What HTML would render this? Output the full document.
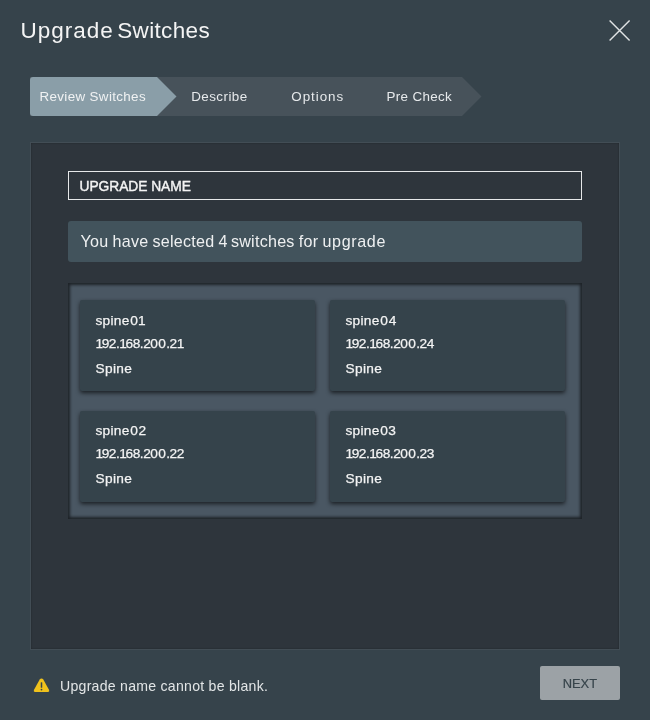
<!DOCTYPE html>
<html>
<head>
<meta charset="utf-8">
<style>
html,body{margin:0;padding:0;}
body{width:650px;height:720px;background:#36434b;position:relative;overflow:hidden;font-family:"Liberation Sans",sans-serif;color:#f2f2f2;}
.a{position:absolute;white-space:nowrap;}
.title{left:20.5px;top:19.5px;font-size:22.5px;line-height:22.5px;letter-spacing:0.42px;color:#f4f4f4;}
.close{left:608px;top:19px;width:23px;height:23px;}
.tabs{left:30px;top:77px;width:452px;height:39px;}
.tabtxt{font-size:13.4px;line-height:13.4px;top:89.5px;letter-spacing:0.35px;color:#e6e9eb;}
.panel{left:30px;top:142px;width:588px;height:506px;background:#2e353c;border:1px solid #424d55;box-shadow:inset 0 0 2px rgba(0,0,0,0.35);}
.input{left:68px;top:171px;width:512px;height:27px;border:1px solid #e6e8e9;}
.inputtxt{left:79.5px;top:180.3px;font-size:13.8px;line-height:13.8px;letter-spacing:-0.05px;color:#f4f4f4;-webkit-text-stroke:0.4px #f4f4f4;}
.info{left:68px;top:221px;width:514px;height:41px;background:#42535c;border-radius:3px;}
.infotxt{left:80.5px;top:233.4px;font-size:16.1px;line-height:16.1px;letter-spacing:0.25px;word-spacing:-0.6px;color:#eef0f1;}
.grid{left:68px;top:283px;width:514px;height:236px;background:#4a5763;box-shadow:inset 0 0 3px 2px rgba(0,0,0,0.6);}
.card{width:235px;height:91px;background:#35434b;border-radius:2px;box-shadow:0 2px 4px rgba(0,0,0,0.65);}
.ct{font-size:13.7px;line-height:13.7px;color:#f4f4f4;-webkit-text-stroke:0.25px #f4f4f4;}
.ip{letter-spacing:0;}
.ip i{font-style:normal;}
i.w{font-style:normal;}
.g1{margin-right:-1.5px;}
.gd{margin-right:-0.5px;}
.g0{margin-right:0.3px;}
.gx{margin-right:-0.45px;}
.sp{letter-spacing:0.35px;}
.nm{letter-spacing:0.28px;}
.warn{left:33px;top:677px;width:17px;height:16px;}
.warntxt{left:60px;top:679px;font-size:14.1px;line-height:14.1px;letter-spacing:0.26px;color:#e2e5e6;}
.btn{left:540px;top:666px;width:80px;height:34px;background:#9ca2a6;border-radius:2px;}
.btntxt{left:562.7px;top:677.8px;font-size:12.9px;line-height:12.9px;color:#37444b;-webkit-text-stroke:0.2px #37444b;}
</style>
</head>
<body><div id="w" style="position:absolute;left:0;top:0;width:650px;height:720px;will-change:transform;">
<div class="a title"><i class="w" style="letter-spacing:1px">Upgrade</i> <i class="w" style="letter-spacing:0.35px;margin-left:-3.3px">Switches</i></div>
<svg class="a close" viewBox="0 0 23 23"><path d="M1.6 1.6L21.6 21.6M21.6 1.6L1.6 21.6" stroke="#dfe2e3" stroke-width="1.45" fill="none"/></svg>

<svg class="a tabs" viewBox="0 0 452 39">
  <polygon points="0,0 432,0 451.5,19.5 432,39 0,39" fill="#47525a"/>
  <path d="M3,0 L127,0 L146.5,19.5 L127,39 L3,39 Q0,39 0,36 L0,3 Q0,0 3,0Z" fill="#8a9ea8"/>
</svg>
<div class="a tabtxt" style="left:39.5px;color:#f0f2f3">Review Switches</div>
<div class="a tabtxt" style="left:191.2px;letter-spacing:0.45px">Describe</div>
<div class="a tabtxt" style="left:291.3px;letter-spacing:0.95px">Options</div>
<div class="a tabtxt" style="left:386.5px">Pre Check</div>

<div class="a panel"></div>
<div class="a input"></div>
<div class="a inputtxt">UPGRADE NAME</div>
<div class="a info"></div>
<div class="a infotxt">You have selected 4 <i class="w" style="margin-left:-1px">switches</i> for <i class="w" style="letter-spacing:0.65px">upgrade</i></div>
<div class="a grid"></div>

<div class="a card" style="left:80px;top:300px"></div>
<div class="a card" style="left:330px;top:300px"></div>
<div class="a card" style="left:80px;top:411px"></div>
<div class="a card" style="left:330px;top:411px"></div>

<div class="a ct nm" style="left:95.5px;top:314.4px">spine<i class="w" style="margin-left:0.5px">0</i><i class="w" style="margin-left:0px">1</i></div>
<div class="a ct ip" style="left:95.5px;top:337.1px"><i class="g1">1</i><i class="gx">9</i><i class="gx">2</i><i class="gd">.</i><i class="g1">1</i><i class="gx">6</i><i class="gx">8</i><i class="gd">.</i><i class="gx">2</i><i class="g0">0</i><i class="g0">0</i><i class="gd">.</i><i class="gx">2</i>1</div>
<div class="a ct sp" style="left:95.5px;top:361.8px">Spine</div>
<div class="a ct nm" style="left:345.5px;top:314.4px">spine<i class="w" style="margin-left:0.5px">0</i><i class="w" style="margin-left:0.8px">4</i></div>
<div class="a ct ip" style="left:345.5px;top:337.1px"><i class="g1">1</i><i class="gx">9</i><i class="gx">2</i><i class="gd">.</i><i class="g1">1</i><i class="gx">6</i><i class="gx">8</i><i class="gd">.</i><i class="gx">2</i><i class="g0">0</i><i class="g0">0</i><i class="gd">.</i><i class="gx">2</i>4</div>
<div class="a ct sp" style="left:345.5px;top:361.8px">Spine</div>
<div class="a ct nm" style="left:95.5px;top:424.4px">spine<i class="w" style="margin-left:0.5px">0</i><i class="w" style="margin-left:0.5px">2</i></div>
<div class="a ct ip" style="left:95.5px;top:447.1px"><i class="g1">1</i><i class="gx">9</i><i class="gx">2</i><i class="gd">.</i><i class="g1">1</i><i class="gx">6</i><i class="gx">8</i><i class="gd">.</i><i class="gx">2</i><i class="g0">0</i><i class="g0">0</i><i class="gd">.</i><i class="gx">2</i>2</div>
<div class="a ct sp" style="left:95.5px;top:471.8px">Spine</div>
<div class="a ct nm" style="left:345.5px;top:424.4px">spine<i class="w" style="margin-left:0.5px">0</i><i class="w" style="margin-left:0.3px">3</i></div>
<div class="a ct ip" style="left:345.5px;top:447.1px"><i class="g1">1</i><i class="gx">9</i><i class="gx">2</i><i class="gd">.</i><i class="g1">1</i><i class="gx">6</i><i class="gx">8</i><i class="gd">.</i><i class="gx">2</i><i class="g0">0</i><i class="g0">0</i><i class="gd">.</i><i class="gx">2</i>3</div>
<div class="a ct sp" style="left:345.5px;top:471.8px">Spine</div>

<svg class="a warn" viewBox="0 0 17 16">
  <path d="M8.5 1.4 Q9.6 1.4 10.3 2.6 L16.1 12.9 Q16.8 14.9 14.9 15 L2.1 15 Q0.2 14.9 0.9 12.9 L6.7 2.6 Q7.4 1.4 8.5 1.4Z" fill="#f0c21c"/>
  <rect x="7.75" y="5.2" width="1.5" height="5.6" rx="0.6" fill="#36434b"/>
  <circle cx="8.5" cy="12.6" r="0.9" fill="#36434b"/>
</svg>
<div class="a warntxt">Upgrade name cannot be blank.</div>

<div class="a btn"></div>
<div class="a btntxt">NEXT</div>
</div></body>
</html>
